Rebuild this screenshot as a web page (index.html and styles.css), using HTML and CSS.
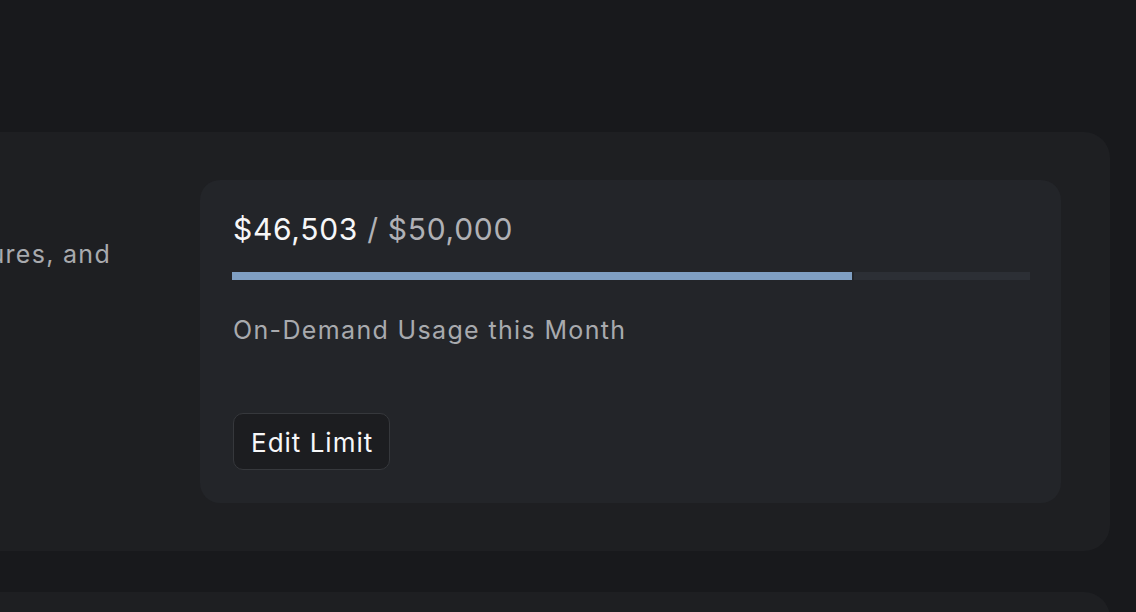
FILE: index.html
```html
<!DOCTYPE html>
<html lang="en">
<head>
<meta charset="utf-8">
<title>On-Demand Usage</title>
<link rel="stylesheet" href="styles.css">
</head>
<body>
<main class="page">
  <section class="panel">
    <div class="panel-info">
      <p class="panel-desc">Pay for usage beyond your plan for premium models, features, and</p>
    </div>
    <div class="usage-card">
      <div class="usage-amount"><span class="usage-spent">$46,503</span> / $50,000</div>
      <div class="usage-bar">
        <div class="usage-fill" style="width: 620px"></div>
        <div class="usage-track"></div>
      </div>
      <div class="usage-label">On-Demand Usage this Month</div>
      <button class="btn-edit" type="button">Edit Limit</button>
    </div>
  </section>
  <section class="panel panel-next"></section>
</main>
</body>
</html>
```

FILE: styles.css
```css
* { box-sizing: border-box; }

html, body {
  margin: 0;
  height: 100%;
  overflow: hidden;
}

body {
  background: #18191c;
  font-family: Inter, "Noto Sans", "Liberation Sans", sans-serif;
  color: #f4f4f5;
}

.page {
  padding-top: 132px;
  display: flex;
  flex-direction: column;
  gap: 41px;
}

.panel {
  width: 1410px;
  margin-left: -300px;
  background: #1e1f22;
  border-radius: 26px;
  padding: 48px 49px 48px 0;
  display: flex;
  justify-content: space-between;
}

.panel-info {
  width: 411px;
  display: flex;
  flex-direction: column;
  align-items: flex-end;
  padding-top: 56px;
}

.panel-desc {
  margin: 0;
  font-size: 25px;
  line-height: 36px;
  letter-spacing: 1.3px;
  color: #a8aaae;
  white-space: nowrap;
}

.usage-card {
  width: 861px;
  height: 323px;
  background: #232529;
  border-radius: 20px;
  padding: 31px 32px 33px 33px;
  display: flex;
  flex-direction: column;
  align-items: flex-start;
}

.usage-amount {
  font-size: 30px;
  line-height: 36px;
  color: #b0b1b5;
  letter-spacing: 0.7px;
}

.usage-spent { color: #f7f7f8; }

.usage-bar {
  margin-top: 25px;
  width: 798px;
  margin-left: -1px;
  height: 8px;
  display: flex;
  gap: 2px;
}

.usage-fill {
  background: #7f9fc3;
  height: 100%;
}

.usage-track {
  flex: 1;
  background: #2c2f35;
  height: 100%;
}

.usage-label {
  margin-top: 32px;
  font-size: 25px;
  line-height: 36px;
  letter-spacing: 1.35px;
  color: #a8aaae;
}

.btn-edit {
  margin-top: 65px;
  font-family: inherit;
  font-size: 26px;
  line-height: 35px;
  letter-spacing: 1px;
  color: #f7f7f8;
  background: #1c1d20;
  border: 1px solid #36383c;
  border-radius: 10px;
  padding: 11px 16px 9px 17px;
  cursor: pointer;
}

.panel-next {
  height: 200px;
  padding: 0;
}
```
